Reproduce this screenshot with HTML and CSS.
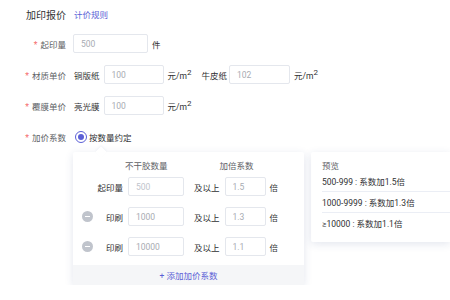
FILE: index.html
```html
<!DOCTYPE html>
<html lang="zh-CN">
<head>
    <meta charset="UTF-8">
    <meta name="viewport" content="width=device-width, initial-scale=1.0">
    <title>加印报价</title>
    <link rel="stylesheet" href="styles.css">
</head>
<body>
    <div class="title-row">
        <span class="title">加印报价</span>
        <a class="link" href="#">计价规则</a>
    </div>

    <div class="form-row">
        <label class="label"><i class="star">*</i>起印量</label>
        <input class="input w75" type="text" value="500">
        <span class="unit">件</span>
    </div>

    <div class="form-row">
        <label class="label"><i class="star">*</i>材质单价</label>
        <span class="sub">铜版纸</span>
        <input class="input w60" type="text" value="100">
        <span class="unit">元/m<sup>2</sup></span>
        <span class="sub second">牛皮纸</span>
        <input class="input w61" type="text" value="102">
        <span class="unit">元/m<sup>2</sup></span>
    </div>

    <div class="form-row">
        <label class="label"><i class="star">*</i>覆膜单价</label>
        <span class="sub">亮光膜</span>
        <input class="input w60" type="text" value="100">
        <span class="unit">元/m<sup>2</sup></span>
    </div>

    <div class="form-row">
        <label class="label"><i class="star">*</i>加价系数</label>
        <span class="radio"><span class="dot"></span></span>
        <span class="radio-text">按数量约定</span>
    </div>

    <div class="rate-wrap">
        <div class="panel">
            <span class="arrow"></span>
            <div class="panel-head">
                <span class="col-qty">不干胶数量</span>
                <span class="col-rate">加倍系数</span>
            </div>

            <div class="rate-row">
                <span class="icon"></span>
                <span class="row-label">起印量</span>
                <input class="input qty disabled" type="text" value="500" readonly>
                <span class="above">及以上</span>
                <input class="input rate" type="text" value="1.5">
                <span class="times">倍</span>
            </div>

            <div class="rate-row">
                <span class="icon minus"></span>
                <span class="row-label">印刷</span>
                <input class="input qty" type="text" value="1000">
                <span class="above">及以上</span>
                <input class="input rate" type="text" value="1.3">
                <span class="times">倍</span>
            </div>

            <div class="rate-row">
                <span class="icon minus"></span>
                <span class="row-label">印刷</span>
                <input class="input qty" type="text" value="10000">
                <span class="above">及以上</span>
                <input class="input rate" type="text" value="1.1">
                <span class="times">倍</span>
            </div>

            <div class="panel-foot">+ 添加加价系数</div>
        </div>

        <div class="preview">
            <div class="preview-title">预览</div>
            <div class="preview-item">500-999 : 系数加1.5倍</div>
            <div class="preview-item">1000-9999 : 系数加1.3倍</div>
            <div class="preview-item">≥10000 : 系数加1.1倍</div>
        </div>
    </div>
</body>
</html>
```

FILE: styles.css
```css
body {
    margin: 0;
    padding: 0;
    overflow: hidden;
    background: #fff;
    font-family: Roboto, "Noto Sans CJK SC", sans-serif;
    font-size: 8.5px;
    color: #606266;
    white-space: nowrap;
}
.title-row {
    height: 28px;
    display: flex;
    align-items: center;
    padding-left: 26px;
}
.title {
    font-size: 10px;
    color: #303133;
}
.link {
    margin-left: 8px;
    color: #5b5fd6;
    text-decoration: none;
}
.form-row {
    height: 31px;
    display: flex;
    align-items: center;
}
.form-row > * {
    flex-shrink: 0;
}
.label {
    width: 66px;
    margin-right: 7px;
    text-align: right;
    color: #606266;
}
.star {
    font-style: normal;
    color: #f56c6c;
    margin-right: 3px;
}
.input {
    box-sizing: border-box;
    height: 19px;
    border: 1px solid #e4e7ed;
    border-radius: 2px;
    padding: 0 0 0 7px;
    font-family: inherit;
    font-size: 8.5px;
    color: #a8abb2;
    outline: none;
    background: #fff;
}
.w75 { width: 75px; }
.w60 { width: 60px; }
.w61 { width: 61px; }
.unit {
    margin-left: 4px;
    color: #303133;
}
.unit sup {
    font-size: 8px;
    line-height: 0;
}
.sub {
    margin-left: 1px;
    margin-right: 4px;
    color: #303133;
}
.sub.second {
    margin-left: 10px;
    margin-right: 2px;
}
.radio {
    box-sizing: border-box;
    width: 12px;
    height: 12px;
    margin-left: 2px;
    border: 1px solid #5b5fd6;
    border-radius: 50%;
    display: flex;
    align-items: center;
    justify-content: center;
}
.dot {
    width: 6px;
    height: 6px;
    border-radius: 50%;
    background: #5b5fd6;
}
.radio-text {
    margin-left: 2px;
    color: #303133;
}
.rate-wrap {
    display: flex;
    align-items: flex-start;
    gap: 7px;
    padding-left: 73px;
}
.panel {
    position: relative;
    flex-shrink: 0;
    width: 231px;
    padding-top: 5px;
    background: #fff;
    border-radius: 2px;
    box-shadow: 0 2px 8px rgba(40, 60, 120, 0.13);
}
.arrow {
    position: absolute;
    top: -4px;
    left: 24px;
    width: 8px;
    height: 8px;
    background: #fff;
    transform: rotate(45deg);
    box-shadow: -1px -1px 2px rgba(40, 60, 120, 0.06);
}
.panel-head {
    position: relative;
    height: 16px;
    display: flex;
    align-items: center;
    padding-left: 52px;
    color: #606266;
}
.col-rate {
    margin-left: 52px;
}
.rate-row {
    height: 19px;
    margin-top: 11px;
    display: flex;
    align-items: center;
    padding-left: 9px;
}
.rate-row > * {
    flex-shrink: 0;
}
.panel-head + .rate-row {
    margin-top: 4px;
}
.icon {
    width: 11px;
    height: 11px;
    border-radius: 50%;
    position: relative;
}
.icon.minus {
    background: #c0c4cc;
}
.icon.minus::after {
    content: "";
    position: absolute;
    left: 3px;
    right: 3px;
    top: 5px;
    height: 1px;
    background: #fff;
}
.row-label {
    width: 30px;
    margin-right: 5px;
    text-align: right;
    color: #303133;
}
.qty { width: 56px; }
.rate { width: 41px; }
.disabled { color: #c0c4cc; }
.above {
    margin: 0 5px 0 10px;
    color: #303133;
}
.times {
    margin-left: 4px;
    color: #303133;
}
.panel-foot {
    margin-top: 9px;
    height: 20px;
    display: flex;
    align-items: center;
    justify-content: center;
    background: #f5f6f8;
    color: #5b5fd6;
}
.preview {
    flex: 1;
    min-width: 0;
    padding: 6px 0 9px 11px;
    background: #fff;
    border-radius: 2px 0 0 2px;
    box-shadow: 0 2px 8px rgba(40, 60, 120, 0.13);
}
.preview-title {
    height: 13px;
    display: flex;
    align-items: center;
    color: #606266;
}
.preview-item {
    height: 20px;
    display: flex;
    align-items: center;
    color: #303133;
    border-bottom: 1px solid #ebeef5;
}
.preview-item:last-child {
    border-bottom: none;
}
```
